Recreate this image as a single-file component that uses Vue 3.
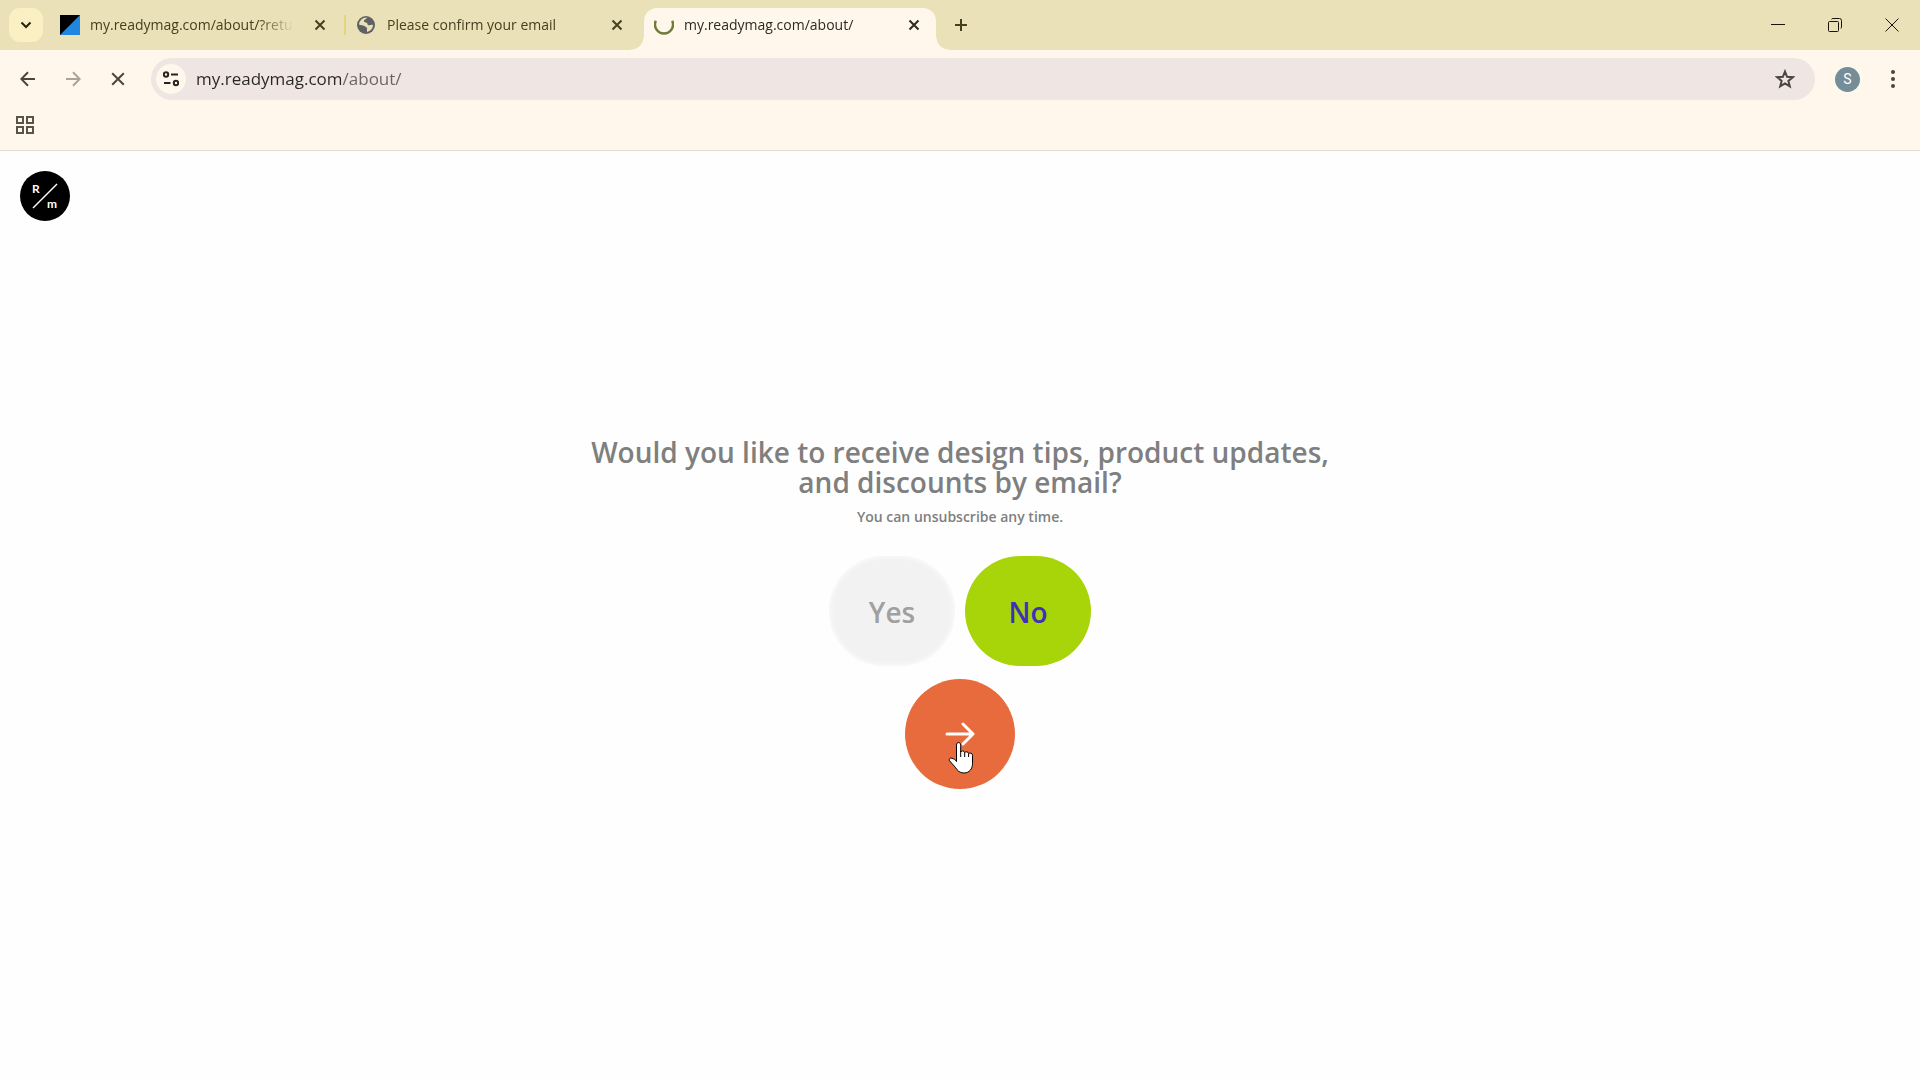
<script setup>
import { ref } from 'vue'

const tabs = ref([
  { id: 1, title: 'my.readymag.com/about/?retu', icon: 'readymag', active: false },
  { id: 2, title: 'Please confirm your email', icon: 'globe', active: false },
  { id: 3, title: 'my.readymag.com/about/', icon: 'spinner', active: true }
])

const url = ref('my.readymag.com/about/')
const answer = ref('no')

function selectTab(id) {
  tabs.value.forEach(tab => {
    tab.active = tab.id === id
  })
}

function closeTab(id) {
  tabs.value = tabs.value.filter(tab => tab.id !== id)
}
</script>

<template>
  <div class="browser">
    <header class="tab-strip">
      <button class="tab-search" aria-label="Search tabs">
        <svg width="12" height="8" viewBox="0 0 12 8"><path d="M1.500 1.500 6 6l4.500-4.500" /></svg>
      </button>

      <div class="tabs">
        <div
            v-for="tab in tabs"
            :key="tab.id"
            class="tab"
            :class="{ 'active': tab.active }"
            @click="selectTab(tab.id)"
        >
          <svg v-if="tab.icon === 'readymag'" class="favicon" viewBox="0 0 20 20">
            <path d="M0 0h20v20H0z" fill="#2086e0" />
            <path d="M0 0h20L0 20z" fill="#000" />
          </svg>
          <svg v-else-if="tab.icon === 'globe'" class="favicon" viewBox="0 0 20 20">
            <circle cx="9" cy="10" r="9" fill="#5f6165" />
            <path d="M10 2.500c-.5 2-3 1.700-3.200 3.500-.1 1.500 2.200 1 3.200 2 .9 1 .3 2 1.800 2.200 1.700.1 2.500-.8 4.200-.2-.1 3.500-2.600 6.300-6 6.900.2-1.900-.4-2.600.2-3.900-1.200-.3-1.500-1.300-2.800-1.900C5.700 10.300 4 10.600 2 9.600 2.300 5.500 5.800 2.200 10 2.500z" fill="#e9e0b5" />
            <path d="M10.500 3c2.900.4 5.100 2.700 5.500 5.500-1.200.7-2 .2-2.700-.6-.8-1-2.300-.8-2.600-2-.2-1 .6-1.600-.2-2.900zM2.200 10.700c1.600.2 3.200.4 3.900 1.700.6 1.200 2 1.200 1.900 2.600l-.5 1.800c-2.800-.8-4.900-3.200-5.300-6.100z" fill="#5f6165" />
          </svg>
          <svg v-else class="favicon" viewBox="0 0 20 20">
            <path d="M1.800 5.800A9 9 0 1 0 18.200 5.800" fill="none" stroke="#6f7b36" stroke-width="2.500" />
          </svg>
          <span class="tab-title">{{ tab.title }}</span>
          <button class="tab-close" aria-label="Close tab" @click.stop="closeTab(tab.id)">
            <svg width="12" height="12" viewBox="0 0 12 12"><path d="m1.500 1.500 9 9m0-9-9 9" /></svg>
          </button>
        </div>
      </div>

      <button class="new-tab" aria-label="New tab">
        <svg width="14" height="14" viewBox="0 0 14 14"><path d="M7 1v12M1 7h12" /></svg>
      </button>

      <div class="window-controls">
        <button aria-label="Minimize">
          <svg width="14" height="14" viewBox="0 0 14 14"><path d="M0 6.500h14" /></svg>
        </button>
        <button aria-label="Restore">
          <svg width="14" height="14" viewBox="0 0 14 14">
            <rect x=".5" y="3.500" width="10" height="10" rx="1" />
            <path d="M3.500 1.200Q4 .5 5 .5h6.500q2 0 2 2V9q0 1-.7 1.500" />
          </svg>
        </button>
        <button aria-label="Close window">
          <svg width="14" height="14" viewBox="0 0 14 14"><path d="m.5.5 13 13m0-13-13 13" /></svg>
        </button>
      </div>
    </header>

    <nav class="toolbar">
      <button class="tool" aria-label="Back">
        <svg width="16" height="16" viewBox="0 0 16 16"><path d="M15 8H1.500M8 1.200 1.300 8 8 14.800" /></svg>
      </button>
      <button class="tool dimmed" aria-label="Forward">
        <svg width="16" height="16" viewBox="0 0 16 16"><path d="M1 8h13.500M8 1.200 14.700 8 8 14.800" /></svg>
      </button>
      <button class="tool" aria-label="Stop loading">
        <svg width="14" height="14" viewBox="0 0 14 14"><path d="m1.200 1.200 11.600 11.600m0-11.600L1.200 12.800" /></svg>
      </button>

      <div class="address-bar">
        <button class="site-info" aria-label="Site information">
          <svg width="16" height="16" viewBox="0 0 16 16">
            <circle cx="3" cy="3.500" r="2.200" />
            <path d="M8 3.500h7M1 12h6.500" />
            <circle cx="13" cy="12" r="2.200" />
          </svg>
        </button>
        <input v-model="url" class="url" type="text" aria-label="Address" spellcheck="false">
        <button class="bookmark" aria-label="Bookmark this page">
          <svg width="20" height="20" viewBox="0 0 20 20">
            <path d="m10 2.500 2.100 5.300 5.700.4-4.400 3.700 1.400 5.500-4.800-3-4.800 3 1.400-5.500-4.400-3.700 5.700-.4z" />
          </svg>
        </button>
      </div>

      <button class="profile" aria-label="Profile">S</button>
      <button class="menu" aria-label="Menu">
        <svg width="4" height="18" viewBox="0 0 4 18">
          <circle cx="2" cy="2" r="2" />
          <circle cx="2" cy="9" r="2" />
          <circle cx="2" cy="16" r="2" />
        </svg>
      </button>
    </nav>

    <div class="bookmarks-bar">
      <button class="apps" aria-label="Apps">
        <svg width="18" height="18" viewBox="0 0 18 18">
          <path d="M1 1h6v6H1zM11 1h6v6h-6zM1 11h6v6H1zM11 11h6v6h-6z" />
        </svg>
      </button>
    </div>

    <main class="page">
      <a class="logo" href="#" aria-label="Home">
        <svg width="50" height="50" viewBox="0 0 50 50">
          <circle cx="25" cy="25" r="25" fill="#000" />
          <path d="M13 37 37 13" stroke="#fff" stroke-width="1.500" />
          <text x="12" y="22">R</text>
          <text x="27" y="37">m</text>
        </svg>
      </a>

      <form class="question" @submit.prevent>
        <h1>Would you like to receive design tips, product updates, and discounts by email?</h1>
        <p>You can unsubscribe any time.</p>
        <div class="answers">
          <button
              type="button"
              class="answer"
              :class="{ 'selected': answer === 'yes' }"
              @click="answer = 'yes'"
          >Yes</button>
          <button
              type="button"
              class="answer"
              :class="{ 'selected': answer === 'no' }"
              @click="answer = 'no'"
          >No</button>
        </div>
        <button class="next" type="submit" aria-label="Continue">
          <svg class="arrow" width="30" height="24" viewBox="0 0 30 24">
            <path d="M2 12h26M18 2l10 10-10 10" />
          </svg>
          <svg class="pointer" width="26" height="34" viewBox="0 0 26 34">
            <path d="M8.500 19V4.200C8.500.6 12.700.6 12.700 4.200V11c.6-1.700 3.600-1.500 4 .7.900-1.500 3.600-1.200 3.900.9 1.100-1.200 3.900-.6 3.900 1.900v8c0 5.500-3.300 9.500-8.500 9.500-4.300 0-6.500-2.200-8.500-5.500l-6-6.800c-.8-1.600.5-3 2.400-2.500 2 .5 3.600 1.700 4.600 3.300z" />
            <path d="M12.700 10v6M16.700 11.500V16M20.600 12.500V16" />
          </svg>
        </button>
      </form>
    </main>
  </div>
</template>

<style>
body {
  margin: 0;
  background: #fefefe;
}
</style>

<style scoped>
.browser {
  display: flex;
  flex-direction: column;
  min-height: 100vh;
  font-family: "Segoe UI", "Open Sans", "Noto Sans", sans-serif;
  background: #fefefe;
}

button {
  display: flex;
  align-items: center;
  justify-content: center;
  padding: 0;
  border: none;
  background: transparent;
  font-family: inherit;
  cursor: pointer;
}

button svg {
  fill: none;
  stroke: currentColor;
}

.tab-strip {
  display: flex;
  align-items: center;
  height: 50px;
  padding-left: 9px;
  background: #eae1b8;
  color: #45401f;
}

.tab-search {
  width: 34px;
  height: 34px;
  margin-right: 4px;
  border-radius: 11px;
  background: #fbf0c3;
  color: #26230f;
}

.tab-search svg {
  stroke-width: 2;
}

.tabs {
  display: flex;
  height: 100%;
}

.tab {
  display: flex;
  align-items: center;
  box-sizing: border-box;
  width: 297px;
  height: 50px;
  padding: 0 14px 0 13px;
  position: relative;
}

.tab:first-child::after {
  content: '';
  position: absolute;
  right: -2px;
  top: 15px;
  width: 2px;
  height: 20px;
  background: #e5d481;
}

.tab.active {
  color: #2c2a22;
}

.tab.active::before {
  content: '';
  position: absolute;
  inset: 8px 2px 0 3px;
  z-index: 0;
  border-radius: 13px 13px 0 0;
  background: #fff7ec;
}

/* flared feet on both sides of the active tab */
.tab.active::after {
  content: '';
  position: absolute;
  left: -10px;
  right: -11px;
  top: auto;
  bottom: 0;
  width: auto;
  height: 13px;
  background:
      radial-gradient(circle at 0 0, transparent 12px, #fff7ec 13px) left / 13px 13px no-repeat,
      radial-gradient(circle at 100% 0, transparent 12px, #fff7ec 13px) right / 13px 13px no-repeat;
}

.tab > * {
  position: relative;
  z-index: 1;
}

.favicon {
  flex: none;
  width: 20px;
  height: 20px;
}

.tab-title {
  flex: 1;
  min-width: 0;
  margin: 0 12px 0 10px;
  overflow: hidden;
  font-size: 14px;
  line-height: 22px;
  white-space: nowrap;
  mask-image: linear-gradient(to right, #000 calc(100% - 40px), transparent calc(100% - 4px));
}

.tab-close {
  flex: none;
  width: 20px;
  height: 20px;
  color: inherit;
}

.tab-close svg {
  stroke-width: 2;
}

.new-tab {
  width: 34px;
  height: 34px;
  margin-left: 6px;
  color: #45401f;
}

.new-tab svg {
  stroke-width: 2;
}

.window-controls {
  display: flex;
  height: 100%;
  margin-left: auto;
}

.window-controls button {
  width: 57px;
  color: #17150b;
}

.toolbar {
  display: flex;
  align-items: center;
  height: 58px;
  padding: 0 7px 0 5px;
  background: #fff7ec;
  color: #4c4639;
}

.tool {
  width: 45px;
  height: 45px;
  color: inherit;
}

.tool svg {
  stroke-width: 2;
}

.tool.dimmed {
  color: #aaa398;
}

.address-bar {
  display: flex;
  flex: 1;
  align-items: center;
  height: 42px;
  margin-left: 11px;
  padding: 0 17px 0 5px;
  border-radius: 21px;
  background: #efe5e2;
}

.site-info {
  width: 30px;
  height: 30px;
  border-radius: 50%;
  background: #fff7ec;
  color: #26241e;
}

.site-info svg {
  stroke-width: 2;
}

/* host in full ink, path slightly lighter */
.url {
  flex: 1;
  min-width: 0;
  margin-left: 10px;
  padding: 0;
  border: none;
  outline: none;
  background: linear-gradient(to right, #2a2622 145px, #6a635c 145px);
  background-clip: text;
  -webkit-text-fill-color: transparent;
  font-family: inherit;
  font-size: 17px;
  line-height: 24px;
}

.bookmark {
  width: 26px;
  height: 26px;
  color: #4a4541;
}

.bookmark svg {
  stroke-width: 2;
}

.profile {
  width: 25px;
  height: 25px;
  margin-left: 20px;
  border-radius: 50%;
  background: #758d99;
  color: #fff;
  font-family: Roboto, sans-serif;
  font-size: 14px;
}

.menu {
  width: 40px;
  height: 40px;
  margin-left: 13px;
}

.menu svg {
  fill: #4c4639;
  stroke: none;
}

.bookmarks-bar {
  display: flex;
  align-items: center;
  height: 42px;
  padding: 0 11px 0;
  border-bottom: 1px solid #e5dccf;
  background: #fff7ec;
}

.apps {
  width: 28px;
  height: 28px;
  margin-bottom: 8px;
  color: #5a5446;
}

.apps svg {
  stroke-width: 2;
}

.page {
  display: flex;
  flex: 1;
  align-items: center;
  justify-content: center;
  position: relative;
}

.logo {
  position: absolute;
  left: 20px;
  top: 20px;
}

.logo svg {
  display: block;
}

.logo text {
  fill: #fff;
  font-family: Lato, sans-serif;
  font-size: 12px;
  font-weight: 700;
}

.question {
  display: flex;
  flex-direction: column;
  align-items: center;
  padding: 20px 20px 25px;
}

h1 {
  max-width: 760px;
  margin: 0;
  color: #7f7f7f;
  font-size: 28px;
  font-weight: 600;
  line-height: 30px;
  text-align: center;
}

p {
  margin: 10px 0 29px;
  color: #7f7f7f;
  font-size: 14px;
  font-weight: 600;
  line-height: 20px;
}

.answers {
  display: flex;
  gap: 10px;
}

.answer {
  width: 126px;
  height: 110px;
  padding-top: 2px;
  border-radius: 55px;
  background: #f2f2f2;
  box-shadow: inset 0 0 6px #fefefe;
  color: #a0a0a0;
  font-size: 28px;
  font-weight: 600;
}

.answer.selected {
  background: #a8d40a;
  box-shadow: none;
  color: #3f31b5;
}

.next {
  width: 110px;
  height: 110px;
  margin-top: 13px;
  border-radius: 50%;
  background: #e76b3c;
  position: relative;
}

.arrow {
  color: #fff;
  stroke-width: 3;
  stroke-linecap: round;
  stroke-linejoin: round;
}

.pointer {
  position: absolute;
  left: 43px;
  top: 62px;
}

.next .pointer path {
  fill: #fff;
  stroke: #000;
  stroke-width: 1;
}
</style>
